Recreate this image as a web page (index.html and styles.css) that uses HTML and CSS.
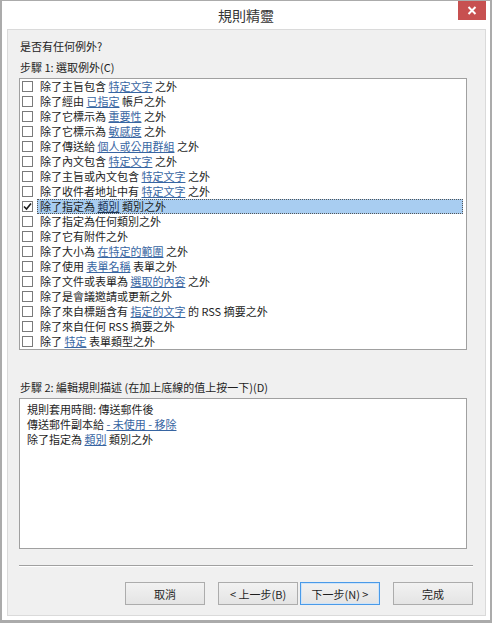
FILE: index.html
```html
<!DOCTYPE html>
<html>
<head>
    <meta charset="utf-8">
    <title>規則精靈</title>
    <link rel="stylesheet" href="styles.css">
</head>
<body>
    <div class="window">
        <div class="title-bar">
            <span></span>
            <span class="title">規則精靈</span>
            <span class="close">
                <svg width="10" height="9" viewBox="0 0 10 9">
                    <path d="M1.5 1 L8.5 8 M8.5 1 L1.5 8" stroke="#fff" stroke-width="2"/>
                </svg>
            </span>
        </div>
        <div class="frame">
            <div class="panel">
                <div class="label question">是否有任何例外?</div>
                <div class="label step">步驟 1: 選取例外(C)</div>
                <div class="list">
                    <div class="row"><span class="box"></span><span class="item">除了主旨包含 <a>特定文字</a> 之外</span></div>
                    <div class="row"><span class="box"></span><span class="item">除了經由 <a>已指定</a> 帳戶之外</span></div>
                    <div class="row"><span class="box"></span><span class="item">除了它標示為 <a>重要性</a> 之外</span></div>
                    <div class="row"><span class="box"></span><span class="item">除了它標示為 <a>敏感度</a> 之外</span></div>
                    <div class="row"><span class="box"></span><span class="item">除了傳送給 <a>個人或公用群組</a> 之外</span></div>
                    <div class="row"><span class="box"></span><span class="item">除了內文包含 <a>特定文字</a> 之外</span></div>
                    <div class="row"><span class="box"></span><span class="item">除了主旨或內文包含 <a>特定文字</a> 之外</span></div>
                    <div class="row"><span class="box"></span><span class="item">除了收件者地址中有 <a>特定文字</a> 之外</span></div>
                    <div class="row selected">
                        <span class="box">
                            <svg width="9" height="9" viewBox="0 0 9 9">
                                <path d="M1 4.5 L3.5 7 L8 1.5" fill="none" stroke="#1a1a1a" stroke-width="1.6"/>
                            </svg>
                        </span>
                        <span class="item">除了指定為 <a>類別</a> 類別之外</span>
                    </div>
                    <div class="row"><span class="box"></span><span class="item">除了指定為任何類別之外</span></div>
                    <div class="row"><span class="box"></span><span class="item">除了它有附件之外</span></div>
                    <div class="row"><span class="box"></span><span class="item">除了大小為 <a>在特定的範圍</a> 之外</span></div>
                    <div class="row"><span class="box"></span><span class="item">除了使用 <a>表單名稱</a> 表單之外</span></div>
                    <div class="row"><span class="box"></span><span class="item">除了文件或表單為 <a>選取的內容</a> 之外</span></div>
                    <div class="row"><span class="box"></span><span class="item">除了是會議邀請或更新之外</span></div>
                    <div class="row"><span class="box"></span><span class="item">除了來自標題含有 <a>指定的文字</a> 的 RSS 摘要之外</span></div>
                    <div class="row"><span class="box"></span><span class="item">除了來自任何 RSS 摘要之外</span></div>
                    <div class="row"><span class="box"></span><span class="item">除了 <a>特定</a> 表單類型之外</span></div>
                </div>
                <div class="label step2">步驟 2: 編輯規則描述 (在加上底線的值上按一下)(D)</div>
                <div class="description">
                    <div>規則套用時間: 傳送郵件後</div>
                    <div>傳送郵件副本給 <a>- 未使用 - 移除</a></div>
                    <div>除了指定為 <a>類別</a> 類別之外</div>
                </div>
                <div class="separator"></div>
                <div class="buttons">
                    <button>取消</button>
                    <button class="back">&lt; 上一步(B)</button>
                    <button class="default">下一步(N) &gt;</button>
                    <button class="finish">完成</button>
                </div>
            </div>
        </div>
    </div>
</body>
</html>
```

FILE: styles.css
```css
body {
    margin: 0;
    background: #fff;
    font-family: "Noto Sans CJK TC", "Noto Sans", sans-serif;
    font-size: 11px;
    color: #1e1e1e;
}
.window {
    width: 492px;
    height: 623px;
    box-sizing: border-box;
    border: 2px solid #ababab;
    border-top-width: 1px;
    border-bottom-width: 3px;
    background: #fff;
    display: flex;
    flex-direction: column;
}
.title-bar {
    height: 28px;
    display: grid;
    grid-template-columns: 1fr auto 1fr;
}
.title {
    font-size: 14px;
    line-height: 28px;
    color: #333;
}
.close {
    justify-self: end;
    width: 28px;
    height: 19px;
    margin-right: 4px;
    background: #c75050;
    display: flex;
    justify-content: center;
    align-items: center;
}
.frame {
    flex: 1;
    display: flex;
    padding: 0 4px 4px 5px;
}
.panel {
    flex: 1;
    border: 1px solid #dadada;
    background: #f0f0f0;
    padding: 0 11px;
    display: flex;
    flex-direction: column;
}
.label {
    line-height: 15px;
    padding-left: 1px;
}
.question {
    margin-top: 9px;
}
.step {
    margin-top: 6px;
}
.step2 {
    margin-top: 30px;
}
a {
    color: #3765a2;
    text-decoration: underline;
    text-underline-offset: 1px;
}
.list {
    margin-top: 3px;
    width: 448px;
    height: 272px;
    box-sizing: border-box;
    border: 1px solid #a0a0a0;
    background: #fff;
}
.row {
    height: 15px;
    display: flex;
    align-items: center;
}
.box {
    width: 11px;
    height: 11px;
    box-sizing: border-box;
    margin-left: 2px;
    margin-right: 4px;
    border: 1px solid #7a7a7a;
    background: #fff;
    display: flex;
    justify-content: center;
    align-items: center;
}
.item {
    flex: 1;
    height: 15px;
    line-height: 15px;
    padding: 0 3px;
    margin-right: 3px;
    white-space: nowrap;
    box-sizing: border-box;
}
.selected .item {
    background: #a8cdf1;
    outline: 1px dotted #555;
    outline-offset: -1px;
}
.selected a {
    color: #1d3558;
}
.description {
    margin-top: 3px;
    width: 448px;
    height: 151px;
    box-sizing: border-box;
    border: 1px solid #a0a0a0;
    background: #fff;
    padding: 3px 7px;
    line-height: 15px;
}
.separator {
    margin-top: 16px;
    width: 454px;
    border-top: 1px solid #a0a0a0;
    border-bottom: 1px solid #fff;
}
.buttons {
    margin-top: 15px;
    width: 454px;
    display: flex;
    justify-content: flex-end;
}
button {
    width: 80px;
    height: 23px;
    box-sizing: border-box;
    border: 1px solid #acacac;
    background: linear-gradient(#f2f2f2, #e4e4e4);
    font-family: inherit;
    font-size: 11px;
    color: #1e1e1e;
    padding: 0;
}
.back {
    margin-left: 13px;
}
.default {
    margin-left: 2px;
    border-color: #4a9ae8;
    box-shadow: inset 0 0 0 1px #cfe4f8;
}
.finish {
    margin-left: 13px;
}
```
